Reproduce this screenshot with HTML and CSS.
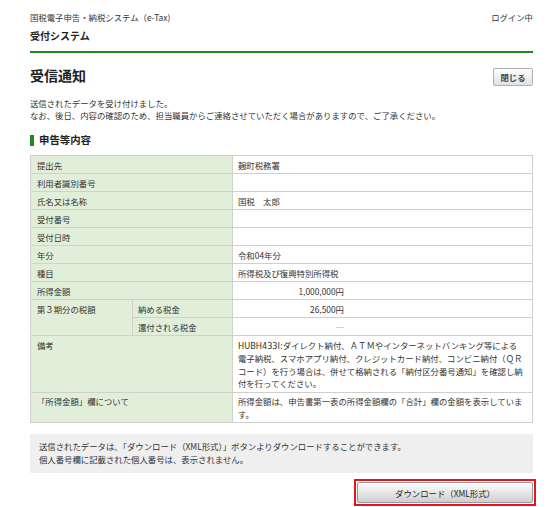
FILE: index.html
```html
<!DOCTYPE html>
<html lang="ja">
<head>
<meta charset="utf-8">
<title>受信通知</title>
<link rel="stylesheet" href="styles.css">
</head>
<body>
<div class="page">
  <header class="header">
    <div class="header-top">
      <span class="site-title">国税電子申告・納税システム（e-Tax)</span>
      <span class="login">ログイン中</span>
    </div>
    <div class="sys-name">受付システム</div>
  </header>

  <div class="title-row">
    <h1 class="title">受信通知</h1>
    <button class="btn-close" type="button">閉じる</button>
  </div>

  <p class="lead">送信されたデータを受け付けました。<br>なお、後日、内容の確認のため、担当職員からご連絡させていただく場合がありますので、ご了承ください。</p>

  <h2 class="section">申告等内容</h2>

  <table class="info">
    <tr><th colspan="2">提出先</th><td>麹町税務署</td></tr>
    <tr><th colspan="2">利用者識別番号</th><td></td></tr>
    <tr><th colspan="2">氏名又は名称</th><td>国税　太郎</td></tr>
    <tr><th colspan="2">受付番号</th><td></td></tr>
    <tr><th colspan="2">受付日時</th><td></td></tr>
    <tr><th colspan="2">年分</th><td>令和04年分</td></tr>
    <tr><th colspan="2">種目</th><td>所得税及び復興特別所得税</td></tr>
    <tr><th colspan="2">所得金額</th><td><span class="amt">1,000,000円</span></td></tr>
    <tr><th rowspan="2" class="sub-head">第３期分の税額</th><th class="sub">納める税金</th><td><span class="amt">26,500円</span></td></tr>
    <tr><th class="sub">還付される税金</th><td><span class="amt dash">─</span></td></tr>
    <tr><th colspan="2">備考</th><td><span class="code">HUBH433I:</span>ダイレクト納付、ＡＴＭやインターネットバンキング等による電子納税、スマホアプリ納付、クレジットカード納付、コンビニ納付（ＱＲコード）を行う場合は、併せて格納される「納付区分番号通知」を確認し納付を行ってください。</td></tr>
    <tr><th colspan="2">「所得金額」欄について</th><td>所得金額は、申告書第一表の所得金額欄の「合計」欄の金額を表示しています。</td></tr>
  </table>

  <div class="notice">送信されたデータは、「ダウンロード（XML形式）」ボタンよりダウンロードすることができます。<br>個人番号欄に記載された個人番号は、表示されません。</div>

  <div class="actions">
    <div class="highlight"><button class="btn-dl" type="button">ダウンロード（XML形式）</button></div>
  </div>
</div>
</body>
</html>
```

FILE: styles.css
```css
* { box-sizing: border-box; }
html, body { margin: 0; padding: 0; background: #fff; }
body {
  font-family: "Noto Sans CJK JP", "Noto Sans", sans-serif;
  font-size: 8.4px;
  color: #333;
}
.page {
  padding: 11px 27px 0 30px;
  display: flex;
  flex-direction: column;
}
.header {
  border-bottom: 2px solid #1e8a1e;
  padding-bottom: 8px;
}
.header-top {
  display: flex;
  justify-content: space-between;
  line-height: 12px;
}
.sys-name {
  margin-top: 6px;
  font-size: 10px;
  font-weight: bold;
  line-height: 14px;
  color: #222;
}
.title-row {
  margin-top: 15px;
  height: 18px;
  display: flex;
  justify-content: space-between;
  align-items: center;
}
.title {
  margin: 0;
  font-size: 14px;
  line-height: 18px;
  font-weight: bold;
  color: #222;
  position: relative;
  top: -2px;
}
.btn-close {
  width: 40px;
  height: 18px;
  padding: 0;
  font-family: inherit;
  font-size: 8.4px;
  font-weight: bold;
  color: #444;
  border: 1px solid #b0b0b0;
  border-radius: 2px;
  background: linear-gradient(#fdfdfd, #e2e2e2);
}
.lead {
  margin: 11px 0 0;
  line-height: 12px;
}
.section {
  margin: 13px 0 0;
  font-size: 10.4px;
  font-weight: bold;
  line-height: 12px;
  color: #222;
  display: flex;
  align-items: center;
  gap: 5px;
}
.section::before {
  content: "";
  width: 4px;
  height: 11px;
  background: #1e8a1e;
}
.info {
  margin-top: 9px;
  width: 100%;
  border-collapse: collapse;
  border: 1px solid #c9c9c9;
}
.info th, .info td {
  border: 1px solid #cdd3ca;
  padding: 2.5px 6px 2px;
  line-height: 12.5px;
  text-align: left;
  vertical-align: top;
  font-weight: normal;
}
.info th {
  background: #e1efda;
  width: 202px;
}
.info th.sub-head { width: 102px; }
.info th.sub { width: 100px; padding-left: 5px; }
.info td {
  background: #fff;
  border-color: #cfcfcf;
  padding-left: 5px;
  padding-right: 7px;
}
.code {
  font-family: "DejaVu Sans", "Noto Sans CJK JP", sans-serif;
  font-size: 8.2px;
}
.amt {
  display: inline-block;
  width: 106px;
  text-align: right;
}
.dash { color: #666; }
.notice {
  margin-top: 11px;
  background: #efefef;
  padding: 6px 9px 7px;
  line-height: 13px;
}
.actions {
  margin-top: 6px;
  display: flex;
  justify-content: flex-end;
  margin-right: -3px;
}
.highlight {
  border: 2px solid #e8141c;
  padding: 1px;
}
.btn-dl {
  display: block;
  width: 176px;
  height: 21px;
  padding: 0;
  font-family: inherit;
  font-size: 8.4px;
  color: #222;
  border: 1px solid #9a9a9a;
  border-radius: 2px;
  background: linear-gradient(#fefefe, #e6e6e6 50%, #cfcfcf);
}
```
